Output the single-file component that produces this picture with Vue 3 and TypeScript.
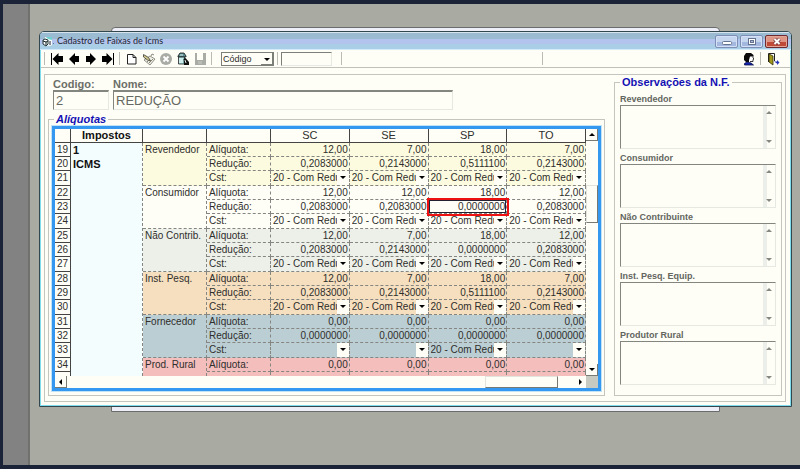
<script setup lang="ts">
import { ref } from 'vue'

interface StateColumn {
  uf: string
}

interface Category {
  name: string
  tone: string
  first: number
  rates: string[]
  reductions: string[]
  cst: string[]
  partial?: boolean
}

interface Note {
  id: string
  label: string
}

const COM = '20 - Com Redução'

const states: StateColumn[] = [{ uf: 'SC' }, { uf: 'SE' }, { uf: 'SP' }, { uf: 'TO' }]

const categories = ref<Category[]>([
  {
    name: 'Revendedor',
    tone: 'cream',
    first: 19,
    rates: ['12,00', '7,00', '18,00', '7,00'],
    reductions: ['0,2083000', '0,2143000', '0,5111100', '0,2143000'],
    cst: [COM, COM, COM, COM],
  },
  {
    name: 'Consumidor',
    tone: 'plain',
    first: 22,
    rates: ['12,00', '12,00', '18,00', '12,00'],
    reductions: ['0,2083000', '0,2083000', '0,0000000', '0,2083000'],
    cst: [COM, COM, COM, COM],
  },
  {
    name: 'Não Contrib.',
    tone: 'mist',
    first: 25,
    rates: ['12,00', '7,00', '18,00', '12,00'],
    reductions: ['0,2083000', '0,2143000', '0,0000000', '0,2083000'],
    cst: [COM, COM, COM, COM],
  },
  {
    name: 'Inst. Pesq.',
    tone: 'peach',
    first: 28,
    rates: ['12,00', '7,00', '18,00', '7,00'],
    reductions: ['0,2083000', '0,2143000', '0,5111100', '0,2143000'],
    cst: [COM, COM, COM, COM],
  },
  {
    name: 'Fornecedor',
    tone: 'steel',
    first: 31,
    rates: ['0,00', '0,00', '0,00', '0,00'],
    reductions: ['0,0000000', '0,0000000', '0,0000000', '0,0000000'],
    cst: ['', '', COM, ''],
  },
  {
    name: 'Prod. Rural',
    tone: 'rose',
    first: 34,
    rates: ['0,00', '0,00', '0,00', '0,00'],
    reductions: [],
    cst: [],
    partial: true,
  },
])

const notes: Note[] = [
  { id: 'obs-revendedor', label: 'Revendedor' },
  { id: 'obs-consumidor', label: 'Consumidor' },
  { id: 'obs-nao-contribuinte', label: 'Não Contribuinte' },
  { id: 'obs-inst', label: 'Inst. Pesq. Equip.' },
  { id: 'obs-produtor', label: 'Produtor Rural' },
]

const searchField = ref('Código')
const searchText = ref('')
const selectedRow = 23
const selectedState = 2
</script>

<template>
  <div class="desktop">
    <div class="side-strip"></div>
    <div class="workspace">
      <div class="back-window"></div>
      <main class="window">
        <header class="titlebar">
          <svg class="app-icon" viewBox="0 0 12 11" aria-hidden="true">
            <path d="M3 1l7 1v7l-2 1-6-1z" fill="#f4fafa" />
            <path d="M4 1l6 0v3l-4-1z" fill="#6fd3cf" />
            <path d="M1 4l2-1 3 1v4l-2 2-3-2z" fill="#fff" stroke="#233" />
            <path d="M1 5l3 1v3M4 6l2-1" stroke="#122" fill="none" />
            <path d="M8 5v4" stroke="#223" />
            <path d="M11 7h1v1h-1z" fill="#5b7c9b" />
          </svg>
          <h1>Cadastro de Faixas de Icms</h1>
          <div class="caption-buttons">
            <button type="button" class="cap" aria-label="Minimizar">
              <svg viewBox="0 0 12 9"><rect x="1.5" y="4.5" width="9" height="3" rx="1" fill="#fff" stroke="#66758f" /></svg>
            </button>
            <button type="button" class="cap" aria-label="Maximizar">
              <svg viewBox="0 0 12 9"><rect x="2.5" y="1.5" width="7" height="6" fill="#fff" stroke="#66758f" /><rect x="4.5" y="3.5" width="3" height="2" fill="#a7b6d4" stroke="#66758f" /></svg>
            </button>
            <button type="button" class="cap close" aria-label="Fechar">
              <svg viewBox="0 0 12 9"><path d="M3.500 2l5 5M8.500 2l-5 5" stroke="#70343a" stroke-width="3.500" /><path d="M3.500 2l5 5M8.500 2l-5 5" stroke="#fff" stroke-width="2" /></svg>
            </button>
          </div>
        </header>

        <div class="toolbar" role="toolbar">
          <span class="sep"></span>
          <button type="button" class="tool" aria-label="Primeiro">
            <svg viewBox="0 0 14 14"><path d="M1 1h1v12H1zM2.500 7L8.500 1v3H13v6H8.500v3z" /></svg>
          </button>
          <button type="button" class="tool" aria-label="Anterior">
            <svg viewBox="0 0 14 14"><path d="M2 7l6-6v3h4v6H8v3z" /></svg>
          </button>
          <button type="button" class="tool" aria-label="Próximo">
            <svg viewBox="0 0 14 14"><path d="M12 7L6 1v3H2v6h4v3z" /></svg>
          </button>
          <button type="button" class="tool" aria-label="Último">
            <svg viewBox="0 0 14 14"><path d="M12 1h1v12h-1zM11.500 7l-6-6v3H1v6h4.500v3z" /></svg>
          </button>
          <span class="sep"></span>
          <button type="button" class="tool" aria-label="Novo">
            <svg viewBox="0 0 14 14"><path d="M2.500 2.500h5.500l3 3v6.500h-8.500zM8 2.500v3h3" fill="#fff" stroke="#222" /></svg>
          </button>
          <button type="button" class="tool" aria-label="Editar">
            <svg viewBox="0 0 14 14">
              <path d="M2 8l6-4 5 3-5 6z" fill="#efeee4" stroke="#77776c" stroke-width=".8" />
              <path d="M1.500 2.500l5 3 2 3.500-3-1-4-3z" fill="#d0c78c" stroke="#3c3b32" stroke-width=".8" />
              <path d="M5 10l3-3M7 11l4-4M9 4l1-2 2 1" stroke="#6a695e" stroke-width=".8" fill="none" />
            </svg>
          </button>
          <button type="button" class="tool" aria-label="Cancelar">
            <svg viewBox="0 0 14 14"><circle cx="7" cy="7" r="6" fill="#a9aba5" /><path d="M4.500 4.500l5 5M9.500 4.500l-5 5" stroke="#fff" stroke-width="1.800" /></svg>
          </button>
          <button type="button" class="tool" aria-label="Pesquisar">
            <svg viewBox="0 0 14 14">
              <path d="M2 4l2-3h4l2 3v1H2z" fill="#5b8f92" stroke="#111" stroke-width=".8" />
              <path d="M2.500 5h6v7h-6z" fill="#9fdcd9" stroke="#222" stroke-width=".8" />
              <path d="M4 6v5M6 6v5" stroke="#fff" />
              <path d="M7.500 7l2-1 3.500 4v3H8z" fill="#111" />
              <path d="M9 8l1 3M4 3h3" stroke="#d9e8e6" />
            </svg>
          </button>
          <button type="button" class="tool" aria-label="Salvar">
            <svg viewBox="0 0 14 14"><path d="M2 1h2v7h6V1h3v12H2z" fill="#a9aba5" /><path d="M5 9h4v3H5z" fill="#b9bbb5" /></svg>
          </button>
          <span class="sep"></span>
          <span class="combo">
            <select v-model="searchField" aria-label="Campo de pesquisa">
              <option>Código</option>
              <option>Nome</option>
            </select>
            <i class="combo-arrow"></i>
          </span>
          <span class="sep"></span>
          <input v-model="searchText" class="search" type="text" aria-label="Pesquisa" />
          <span class="sep wide"></span>
          <span class="blank"></span>
          <span class="sep"></span>
          <span class="stretch"></span>
          <button type="button" class="tool" aria-label="Usuário">
            <svg viewBox="0 0 14 14">
              <path d="M5 3h5l1.500 1.500V9L9 11H5z" fill="#fff" />
              <path d="M2 4l2-3h5l2.500 2v1.500H8L7 8v2H4L2 8z" fill="#0a0a0a" />
              <path d="M11 4.500v1.500l1 1-1 .5v2H8" fill="none" stroke="#222" stroke-width=".9" />
              <path d="M2.500 13v-1.500L5 10l4 1 2.500 2z" fill="#1626b0" stroke="#070f4c" stroke-width=".8" />
            </svg>
          </button>
          <span class="sep"></span>
          <button type="button" class="tool" aria-label="Sair">
            <svg viewBox="0 0 14 14">
              <path d="M2.500 10V1.500h6V9" fill="#fff" stroke="#222" />
              <path d="M3 2l4 2v9l-4-3z" fill="#a39a1c" stroke="#333008" stroke-width=".8" />
              <path d="M8 9.500h3V8l2.500 2.500L11 13v-1.500" fill="#2734b8" />
            </svg>
          </button>
        </div>

        <div class="frame">
          <section class="left">
            <div class="record">
              <div class="field code">
                <label for="codigo">Codigo:</label>
                <input id="codigo" type="text" value="2" disabled />
              </div>
              <div class="field name">
                <label for="nome">Nome:</label>
                <input id="nome" type="text" value="REDUÇÃO" disabled />
              </div>
            </div>

            <fieldset class="rates">
              <legend>Alíquotas</legend>
              <div class="grid">
                <div class="viewport">
                  <table>
                    <colgroup>
                      <col class="c-num" />
                      <col class="c-tax" />
                      <col class="c-cat" />
                      <col class="c-kind" />
                      <col v-for="s in states" :key="s.uf" />
                    </colgroup>
                    <thead>
                      <tr>
                        <th></th>
                        <th class="strong">Impostos</th>
                        <th></th>
                        <th></th>
                        <th v-for="s in states" :key="s.uf">{{ s.uf }}</th>
                      </tr>
                    </thead>
                    <tbody>
                      <template v-for="(c, ci) in categories" :key="c.name">
                        <tr :class="c.tone">
                          <th scope="row" class="num">{{ c.first }}</th>
                          <td v-if="ci === 0" class="tax" :rowspan="categories.length * 3 - 1">1<br />ICMS</td>
                          <td class="cat" :rowspan="c.partial ? 2 : 3">{{ c.name }}</td>
                          <td>Alíquota:</td>
                          <td v-for="(r, i) in c.rates" :key="i" class="val">{{ r }}</td>
                        </tr>
                        <tr v-if="c.partial" :class="c.tone">
                          <th></th>
                          <td></td>
                          <td v-for="s in states" :key="s.uf"></td>
                        </tr>
                        <template v-else>
                          <tr :class="c.tone">
                            <th scope="row" class="num">{{ c.first + 1 }}</th>
                            <td>Redução:</td>
                            <td
                              v-for="(r, i) in c.reductions"
                              :key="i"
                              class="val"
                              :class="{ selected: c.first + 1 === selectedRow && i === selectedState }"
                            >{{ r }}</td>
                          </tr>
                          <tr :class="c.tone" class="third">
                            <th scope="row" class="num">{{ c.first + 2 }}</th>
                            <td>Cst:</td>
                            <td v-for="(s, i) in states" :key="s.uf" class="pick">
                              <span class="cell-combo">
                                <select v-model="c.cst[i]" :aria-label="'Cst ' + c.name + ' ' + s.uf">
                                  <option value=""></option>
                                  <option>{{ COM }}</option>
                                </select>
                                <i class="cell-arrow"></i>
                              </span>
                            </td>
                          </tr>
                        </template>
                      </template>
                    </tbody>
                  </table>
                </div>
                <div class="vbar">
                  <button type="button" class="sb" aria-label="Subir"><i class="tri up"></i></button>
                  <span class="vthumb"></span>
                  <button type="button" class="sb end" aria-label="Descer"><i class="tri down"></i></button>
                </div>
                <div class="hbar">
                  <button type="button" class="sb" aria-label="Esquerda"><i class="tri back"></i></button>
                  <span class="hthumb"></span>
                  <button type="button" class="sb flat" aria-label="Direita"><i class="tri next"></i></button>
                </div>
                <div class="corner"></div>
              </div>
            </fieldset>
          </section>

          <fieldset class="notes">
            <legend>Observações da N.F.</legend>
            <div v-for="n in notes" :key="n.id" class="note">
              <label :for="n.id">{{ n.label }}</label>
              <div class="memo">
                <textarea :id="n.id" disabled></textarea>
                <div class="memo-bar">
                  <i class="tri up"></i>
                  <i class="tri down"></i>
                </div>
              </div>
            </div>
          </fieldset>
        </div>
      </main>
    </div>
  </div>
</template>

<style>
body {
  background: #1a2338;
}
</style>

<style scoped>
* {
  box-sizing: border-box;
}
.desktop {
  display: flex;
  min-height: 100vh;
  border: solid #1a2338;
  border-width: 4px 0 4px 3px;
  background: #a9aba2;
  font-family: 'Liberation Sans', Arial, sans-serif;
  font-size: 10px;
  color: #2e2e2c;
}
.side-strip {
  flex: none;
  width: 27px;
  background: #828282;
  border-right: 2px solid #70716c;
}
.workspace {
  position: relative;
  flex: 1;
  align-self: flex-start;
  min-width: 0;
  margin: 27px 8px 0 9px;
}
.back-window {
  position: absolute;
  inset: -4px 72px -5px 72px;
  background: #eeeef8;
  border: 1px solid #6a6c6c;
  border-radius: 4px 4px 0 0;
}
.window {
  position: relative;
  background: #fefef7;
  border: 1px solid #33474f;
  border-radius: 5px 5px 0 0;
  box-shadow: inset 0 0 0 1px #7fdcec;
  padding: 0 1px 4px;
  overflow: hidden;
}
.titlebar {
  display: flex;
  align-items: center;
  height: 18px;
  margin: 0 -1px;
  padding: 0 3px 0 2px;
  background: linear-gradient(#d7e4ee 0 1px, #9abbd2 1px 7px, #b2c4ed 7px 12px, #a9cee5 12px 17px, #d2eafa 17px);
}
.app-icon {
  width: 12px;
  height: 11px;
}
h1 {
  flex: 1;
  margin: 0 0 0 3px;
  font: 9px/16px Lato, 'Open Sans', sans-serif;
  color: #1c2630;
}
.caption-buttons {
  display: flex;
  gap: 2px;
}
.cap {
  display: flex;
  align-items: center;
  justify-content: center;
  width: 23px;
  height: 13px;
  padding: 0;
  border: 1px solid #7d8fb4;
  border-radius: 2px;
  background: linear-gradient(#c7d6ef 0 50%, #a4b8df 50%);
  box-shadow: inset 0 0 0 1px #d3e0f6;
}
.cap svg {
  width: 12px;
  height: 9px;
}
.cap.close {
  border-color: #6d2a30;
  background: linear-gradient(#dd9585 0 50%, #c04a38 50%);
  box-shadow: inset 0 0 0 1px #e3a596;
}
.toolbar {
  display: flex;
  align-items: center;
  height: 18px;
  padding-right: 9px;
  border-bottom: 1px solid #bfc1ba;
}
.sep {
  flex: none;
  width: 1px;
  height: 13px;
  margin: 0 3px;
  background: #b9bbb4;
}
.sep.wide {
  margin-left: 9px;
}
.blank {
  flex: 0 1 194px;
}
.stretch {
  flex: 1;
}
.tool {
  flex: none;
  display: flex;
  align-items: center;
  justify-content: center;
  width: 17px;
  height: 16px;
  padding: 0;
  border: 0;
  background: none;
}
.tool svg {
  width: 14px;
  height: 14px;
  fill: #000;
}
.combo {
  position: relative;
  display: flex;
  width: 53px;
  height: 14px;
  margin-left: 6px;
  border: 1px solid #7c7f78;
}
select {
  appearance: none;
  width: 100%;
  margin: 0;
  padding: 0;
  border: 0;
  border-radius: 0;
  background: transparent;
  color: inherit;
  font: inherit;
  outline: none;
}
.combo select {
  padding-left: 1px;
  font-size: 9px;
  line-height: 12px;
}
.combo-arrow,
.cell-arrow {
  position: absolute;
  top: 0;
  right: 0;
  bottom: 0;
  width: 12px;
  background: #fefef7;
  pointer-events: none;
}
.combo-arrow {
  border: solid #7c7f78;
  border-width: 0 1px 1px 0;
}
.combo-arrow::after,
.cell-arrow::after {
  content: '';
  position: absolute;
  top: 5px;
  left: 3px;
  border: solid transparent;
  border-width: 3px 3px 0;
  border-top-color: #000;
}
.search {
  width: 51px;
  height: 14px;
  padding: 0 2px;
  border: 1px solid;
  border-color: #7c7f78 #e6e8e2 #e6e8e2 #7c7f78;
  background: #fefef7;
  font: inherit;
}
.frame {
  display: flex;
  gap: 9px;
  margin: 6px 4px 0 3px;
  padding: 1px 3px 5px;
  border: 1px solid #c3c5be;
}
.left {
  flex: 1;
  min-width: 0;
  padding-top: 2px;
}
.record {
  display: flex;
  gap: 4px;
  margin: 0 0 3px 5px;
}
.field {
  display: flex;
  flex-direction: column;
}
.field label,
legend {
  font-size: 11px;
  font-weight: bold;
  line-height: 12px;
}
.field label {
  color: #6c6e68;
}
.field.code {
  width: 56px;
}
.field.name {
  flex: 0 1 340px;
}
.field input {
  width: 100%;
  height: 20px;
  padding: 0 2px;
  border: 1px solid;
  border-color: #83867f #e6e8e2 #e6e8e2 #83867f;
  border-top-width: 2px;
  background: #fefef7;
  color: #666862;
  font: 13px 'Liberation Sans', Arial, sans-serif;
}
fieldset {
  min-width: 0;
  margin: 0;
  border: 1px solid #c3c5be;
}
legend {
  padding: 0 2px;
  color: #1411b4;
}
.rates {
  padding: 1px 3px 4px;
}
.rates legend {
  margin-left: 2px;
  font-style: italic;
}
.grid {
  display: grid;
  grid-template-columns: minmax(0, 1fr) 12px;
  border: 3px solid #3498f0;
  outline: 1px solid #c2e2f6;
}
.viewport {
  height: 247px;
  overflow: hidden;
}
table {
  width: 100%;
  table-layout: fixed;
  border-collapse: separate;
  border-spacing: 0;
}
.c-num {
  width: 16px;
}
.c-tax {
  width: 72px;
}
.c-cat,
.c-kind {
  width: 64px;
}
tr {
  height: 14px;
}
tr.third {
  height: 15px;
}
th,
td {
  height: 14px;
  padding: 0 0 0 2px;
  border: solid #444;
  border-width: 0 1px 1px 0;
  line-height: 13px;
  text-align: left;
  vertical-align: top;
  white-space: nowrap;
  overflow: hidden;
}
td {
  border: dashed #858681;
  border-width: 0 1px 1px 0;
}
.third th,
.third td {
  height: 15px;
}
th {
  padding: 0;
  font-size: 11px;
  font-weight: normal;
  text-align: center;
}
th.strong {
  font-weight: bold;
  color: #111;
}
th.num {
  font-size: 10px;
}
td.val {
  padding-right: 1px;
  text-align: right;
}
td.tax {
  background: #f4fdfe;
  font-size: 11px;
  font-weight: bold;
  line-height: 14px;
  color: #111;
}
.cream td:not(.tax) {
  background: #fdfbdf;
}
.mist td {
  background: #edf0e8;
}
.peach td {
  background: #f6dfbe;
}
.steel td {
  background: #bbced4;
}
.rose td {
  background: #f4bebd;
}
td.selected {
  position: relative;
  overflow: visible;
}
td.selected::before,
td.selected::after {
  content: '';
  position: absolute;
}
td.selected::before {
  inset: 0;
  border: 1px solid #223;
}
td.selected::after {
  inset: -2px -3px -3px -2px;
  z-index: 1;
  border: 2px solid #ee1111;
}
td.pick {
  padding: 0 0 0 1px;
}
.cell-combo {
  position: relative;
  display: block;
  height: 14px;
}
.cell-combo select {
  display: block;
  height: 14px;
  padding-left: 1px;
  line-height: 14px;
}
.tri {
  display: block;
  width: 0;
  height: 0;
  border: 3px solid transparent;
}
.tri.up {
  border-top: 0;
  border-bottom-color: #000;
}
.tri.down {
  border-bottom: 0;
  border-top-color: #000;
}
.tri.back {
  border-left: 0;
  border-right-color: #000;
}
.tri.next {
  border-right: 0;
  border-left-color: #000;
}
.vbar,
.hbar {
  display: flex;
  background: #fefef7;
}
.vbar {
  flex-direction: column;
}
.hbar {
  height: 12px;
}
.sb {
  flex: none;
  display: flex;
  align-items: center;
  justify-content: center;
  width: 12px;
  height: 12px;
  padding: 0;
  border: solid #777a74;
  border-width: 0 1px 1px 0;
  background: #fefef7;
}
.sb.flat {
  border: 0;
}
.vthumb {
  height: 38px;
  margin-top: 44px;
  border: 1px solid;
  border-color: #e2e4de #777a74 #777a74 #e2e4de;
}
.sb.end {
  margin-top: auto;
}
.hthumb {
  width: 73px;
  margin: 0 16px 0 auto;
  border: 1px solid;
  border-color: #e2e4de #777a74 #777a74 #e2e4de;
}
.corner {
  background: #c6cac1;
}
.notes {
  flex: none;
  width: 168px;
  padding: 6px 5px 9px;
}
.note + .note {
  margin-top: 4px;
}
.note label {
  display: block;
  font-size: 9px;
  font-weight: bold;
  line-height: 11px;
  color: #63655f;
}
.memo {
  display: flex;
  height: 44px;
  border: 1px solid;
  border-color: #83867f #e6e8e2 #e6e8e2 #83867f;
}
textarea {
  flex: 1;
  min-width: 0;
  padding: 1px;
  border: 0;
  background: #fefef7;
  resize: none;
}
.memo-bar {
  display: flex;
  flex-direction: column;
  justify-content: space-between;
  align-items: center;
  width: 12px;
  padding: 5px 0;
  background: linear-gradient(90deg, #eceee9 4px, #fefef7 4px);
}
.memo-bar .tri.up {
  border-bottom-color: #858881;
}
.memo-bar .tri.down {
  border-top-color: #858881;
}
</style>
